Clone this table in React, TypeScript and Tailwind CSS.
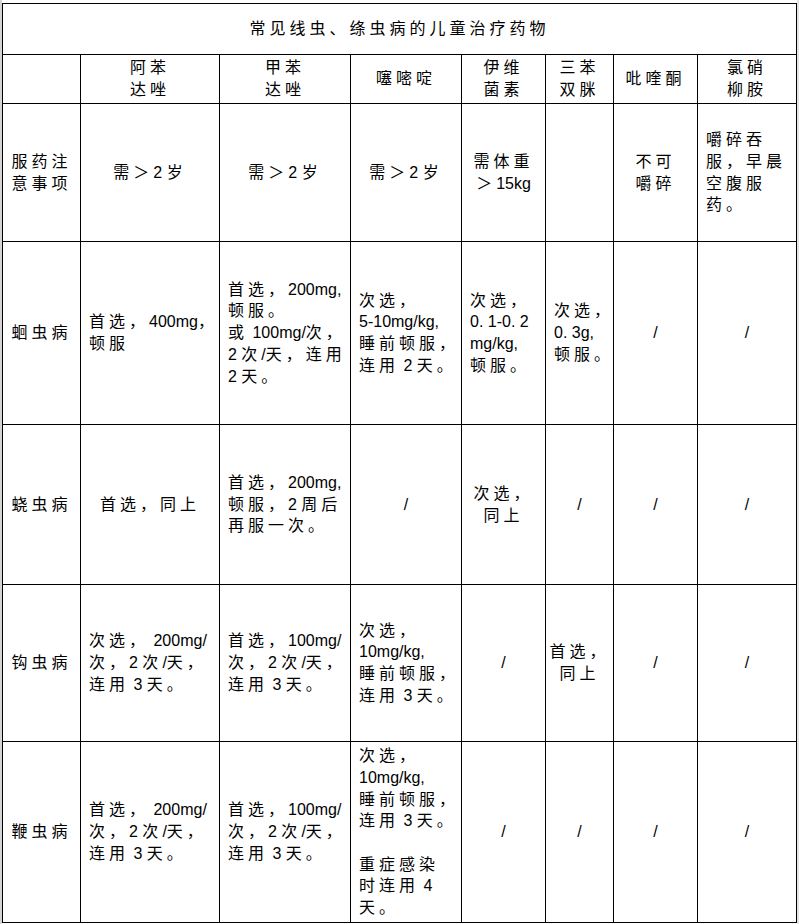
import React from "react";

const CJK_SPLIT = /([\u3000-\u303f\u4e00-\u9fff\uff00-\uffef]+)/;

function Txt({ s }: { s: string }) {
  const parts = s.split(CJK_SPLIT);
  return (
    <>
      {parts.map((p, i) =>
        p === "" ? null : i % 2 === 1 ? (
          <span key={i} className="tracking-[4px]">
            {p}
          </span>
        ) : (
          <span key={i}>{p}</span>
        )
      )}
    </>
  );
}

function Lines({ lines }: { lines: string[] }) {
  return (
    <>
      {lines.map((l, i) => (
        <div key={i} className="whitespace-pre h-[21.7px]">
          <Txt s={l} />
        </div>
      ))}
    </>
  );
}

function C({ lines }: { lines: string[] }) {
  return (
    <td className="border border-black text-center align-middle p-0">
      <Lines lines={lines} />
    </td>
  );
}

function L({ lines }: { lines: string[] }) {
  return (
    <td className="border border-black text-left align-middle py-0 pl-2 pr-0">
      <Lines lines={lines} />
    </td>
  );
}

export default function App() {
  return (
    <div className="flex w-[799px] h-[924px] bg-white text-black font-['Liberation_Sans','Noto_Sans_CJK_SC',sans-serif] text-[16px] leading-[21.7px] overflow-hidden">
      <div className="w-[2px] h-full bg-[#d4d4d4] shrink-0" />
      <div className="pt-[3px] shrink-0">
        <table className="table-fixed border-collapse w-[794px]">
          <colgroup>
            <col className="w-[78px]" />
            <col className="w-[139px]" />
            <col className="w-[131px]" />
            <col className="w-[111px]" />
            <col className="w-[84px]" />
            <col className="w-[68px]" />
            <col className="w-[84px]" />
            <col className="w-[99px]" />
          </colgroup>
          <tbody>
            <tr className="h-[51px]">
              <td colSpan={8} className="border border-black text-center align-middle p-0">
                <Txt s="常见线虫、绦虫病的儿童治疗药物" />
              </td>
            </tr>
            <tr className="h-[49px]">
              <C lines={[""]} />
              <C lines={["阿苯", "达唑"]} />
              <C lines={["甲苯", "达唑"]} />
              <C lines={["噻嘧啶"]} />
              <C lines={["伊维", "菌素"]} />
              <C lines={["三苯", "双脒"]} />
              <C lines={["吡喹酮"]} />
              <C lines={["氯硝", "柳胺"]} />
            </tr>
            <tr className="h-[138px]">
              <C lines={["服药注", "意事项"]} />
              <C lines={["需＞2 岁"]} />
              <C lines={["需＞2 岁"]} />
              <C lines={["需＞2 岁"]} />
              <C lines={["需体重", "＞15kg"]} />
              <C lines={[""]} />
              <C lines={["不可", "嚼碎"]} />
              <L lines={["嚼碎吞", "服，早晨", "空腹服", "药。"]} />
            </tr>
            <tr className="h-[183px]">
              <C lines={["蛔虫病"]} />
              <L lines={["首选，400mg，", "顿服"]} />
              <L lines={["首选，200mg,", "顿服。", "或 100mg/次，", "2 次/天，连用", "2 天。"]} />
              <L lines={["次选，", "5-10mg/kg,", "睡前顿服，", "连用 2 天。"]} />
              <L lines={["次选，", "0. 1-0. 2", "mg/kg,", "顿服。"]} />
              <L lines={["次选，", "0. 3g,", "顿服。"]} />
              <C lines={["/"]} />
              <C lines={["/"]} />
            </tr>
            <tr className="h-[160px]">
              <C lines={["蛲虫病"]} />
              <C lines={["首选，同上"]} />
              <L lines={["首选，200mg,", "顿服，2 周后", "再服一次。"]} />
              <C lines={["/"]} />
              <C lines={["次选，", "同上"]} />
              <C lines={["/"]} />
              <C lines={["/"]} />
              <C lines={["/"]} />
            </tr>
            <tr className="h-[157px]">
              <C lines={["钩虫病"]} />
              <L lines={["次选， 200mg/", "次，2 次/天，", "连用 3 天。"]} />
              <L lines={["首选，100mg/", "次，2 次/天，", "连用 3 天。"]} />
              <L lines={["次选，", "10mg/kg,", "睡前顿服，", "连用 3 天。"]} />
              <C lines={["/"]} />
              <C lines={["首选，", "同上"]} />
              <C lines={["/"]} />
              <C lines={["/"]} />
            </tr>
            <tr className="h-[181px]">
              <C lines={["鞭虫病"]} />
              <L lines={["首选， 200mg/", "次，2 次/天，", "连用 3 天。"]} />
              <L lines={["首选，100mg/", "次，2 次/天，", "连用 3 天。"]} />
              <L lines={["次选，", "10mg/kg,", "睡前顿服，", "连用 3 天。", "", "重症感染", "时连用 4", "天。"]} />
              <C lines={["/"]} />
              <C lines={["/"]} />
              <C lines={["/"]} />
              <C lines={["/"]} />
            </tr>
          </tbody>
        </table>
      </div>
      <div className="flex-1 h-full bg-[#e3e3e3]" />
    </div>
  );
}
